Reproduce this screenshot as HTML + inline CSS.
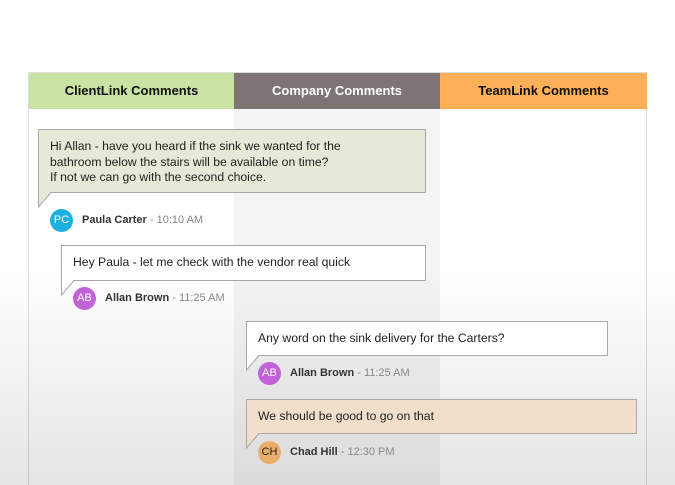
<!DOCTYPE html>
<html><head><style>
*{margin:0;padding:0;box-sizing:border-box}
html,body{width:675px;height:485px;overflow:hidden}
body{background:#fff;font-family:"Liberation Sans",sans-serif;position:relative}
.wrap{position:absolute;left:28px;top:72px;width:619px;height:413px;border:1px solid #ddd;border-bottom:none}
.h{position:absolute;top:0;height:36px;line-height:36px;text-align:center;font-weight:bold;font-size:13px}
.col2{position:absolute;left:205px;top:36px;width:206px;height:377px;background:#f4f4f4}
.b{position:absolute;border:1px solid #a8a8a8;font-size:12.2px;color:#222;line-height:17px;padding:8px 11px}
.tail{position:absolute;overflow:visible}
.av{position:absolute;width:23px;height:23px;border-radius:50%;color:#fff;font-size:11px;text-align:center;line-height:23px}
.n{position:absolute;font-size:11px;color:#333;font-weight:bold}
.n span{font-weight:normal;color:#888}
.ov{position:absolute;left:0;top:0;width:675px;height:485px;background:linear-gradient(to bottom,rgba(0,0,0,0) 55%,rgba(0,0,0,0.1) 100%);pointer-events:none}
</style></head><body>
<div class="wrap">
<div class="h" style="left:0;width:205px;background:#c9e3a5;color:#111">ClientLink Comments</div>
<div class="h" style="left:205px;width:206px;background:#7e7474;color:#fff">Company Comments</div>
<div class="h" style="left:411px;width:207px;background:#fdb057;color:#111">TeamLink Comments</div>
<div class="col2"></div>
</div>
<div class="ov"></div>

<div class="b" style="left:38px;top:129px;width:388px;height:64px;background:#e3ead7;line-height:15.5px;padding-top:9px">Hi Allan - have you heard if the sink we wanted for the<br>bathroom below the stairs will be available on time?<br>If not we can go with the second choice.</div>
<svg class="tail" style="left:38px;top:192px" width="20" height="18"><path d="M0.5 0 V15 L13 0.5" fill="#e3ead7" stroke="#a8a8a8"/><path d="M1.5 0 H12" stroke="#e3ead7" stroke-width="2"/></svg>
<div class="av" style="left:50px;top:209px;background:#1cb0df">PC</div>
<div class="n" style="left:82px;top:214px">Paula Carter <span>- 10:10 AM</span></div>

<div class="b" style="left:61px;top:245px;width:365px;height:36px;background:#fff">Hey Paula - let me check with the vendor real quick</div>
<svg class="tail" style="left:61px;top:280px" width="20" height="18"><path d="M0.5 0 V15 L13 0.5" fill="#fff" stroke="#a8a8a8"/><path d="M1.5 0 H12" stroke="#fff" stroke-width="2"/></svg>
<div class="av" style="left:73px;top:287px;background:#c162d8">AB</div>
<div class="n" style="left:105px;top:292px">Allan Brown <span>- 11:25 AM</span></div>

<div class="b" style="left:246px;top:321px;width:362px;height:35px;background:#fff">Any word on the sink delivery for the Carters?</div>
<svg class="tail" style="left:246px;top:355px" width="20" height="18"><path d="M0.5 0 V15 L13 0.5" fill="#fff" stroke="#a8a8a8"/><path d="M1.5 0 H12" stroke="#fff" stroke-width="2"/></svg>
<div class="av" style="left:258px;top:362px;background:#c162d8">AB</div>
<div class="n" style="left:290px;top:367px">Allan Brown <span>- 11:25 AM</span></div>

<div class="b" style="left:246px;top:399px;width:391px;height:35px;background:#f1dfcc">We should be good to go on that</div>
<svg class="tail" style="left:246px;top:433px" width="20" height="18"><path d="M0.5 0 V15 L13 0.5" fill="#f1dfcc" stroke="#a8a8a8"/><path d="M1.5 0 H12" stroke="#f1dfcc" stroke-width="2"/></svg>
<div class="av" style="left:258px;top:441px;background:#e9ad6b;color:#222">CH</div>
<div class="n" style="left:290px;top:446px">Chad Hill <span>- 12:30 PM</span></div>
</body></html>
